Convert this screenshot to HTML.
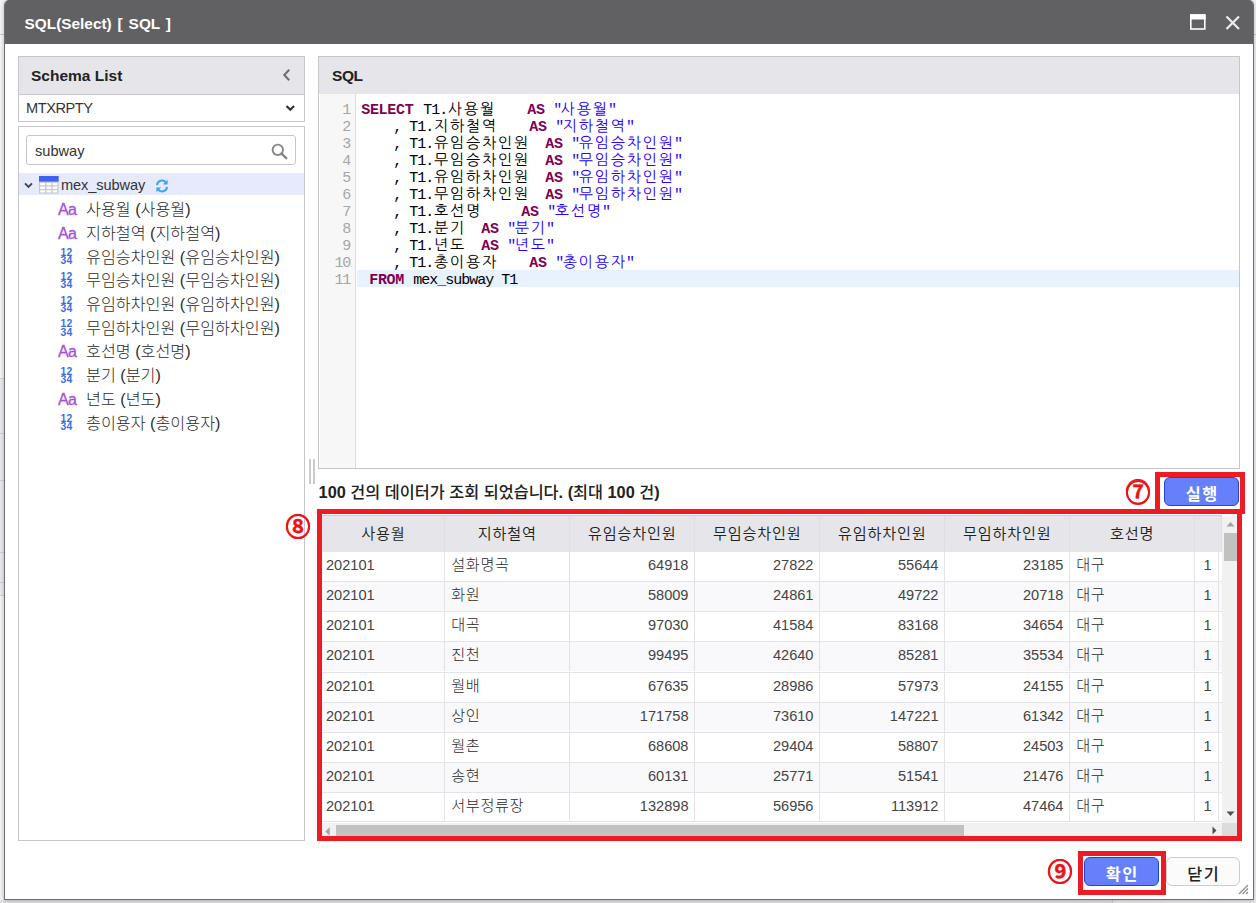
<!DOCTYPE html>
<html lang="ko"><head><meta charset="utf-8"><title>SQL(Select)</title>
<style>
*{box-sizing:border-box;margin:0;padding:0}
html,body{width:1256px;height:903px;overflow:hidden;background:#f1f1f4;font-family:"Liberation Sans","Noto Sans CJK KR",sans-serif;color:#333}
.abs{position:absolute}
#bg{left:0;top:0;width:1256px;height:903px;background:#f3f3f6}
#dlg{left:4px;top:0;width:1250px;height:900px;background:#fff;border:1px solid #6d6d70;border-top:none;border-radius:5px 5px 0 0;overflow:hidden;box-shadow:0 1px 4px rgba(0,0,0,.25)}
#title{left:0;top:0;width:100%;height:44px;background:#616163;color:#fff;font-weight:bold;font-size:15.4px;line-height:47px;padding-left:19.5px;word-spacing:1.6px}
.panel{border:1px solid #c6c6ca;background:#fff}
.phead{left:0;top:0;right:0;height:37px;background:#e6e6ea;font-weight:bold;font-size:15.5px;line-height:37px;color:#222;padding-left:12px}
.red{border:5px solid #ed1c24}
.btn{height:29px;width:75px;border-radius:6px;font-size:16.3px;font-weight:bold;text-align:center;line-height:32px;letter-spacing:1.4px;padding-left:1.4px}
.btn.blue{background:#6680fb;border:1px solid #2443d2;color:#fff}
.btn.white{background:#fbfbfc;border:1px solid #cdcdd0;color:#222}
.ring{width:24.6px;height:25px;border:2px solid #ee1118;border-radius:50%}
.circ{color:#ee1118;-webkit-text-stroke:.3px #ee1118;font-weight:bold;font-size:25px;line-height:30px;width:30px;text-align:center;font-family:"Liberation Sans","Noto Sans CJK KR",sans-serif}
/* tree */
.ti{left:0;width:285px;height:23.7px;font-size:16.2px;line-height:23.7px;color:#333;white-space:nowrap}
.ti .ic{position:absolute;left:38px;top:0;width:22px;text-align:center}
.ti .aa{color:#a550d6;font-size:16px;font-weight:normal;letter-spacing:-.9px;-webkit-text-stroke:.3px #a550d6;left:37px}
.ti .nn{color:#3b6fe0;font-size:10.4px;line-height:8.2px;font-weight:bold;top:3.5px;letter-spacing:.3px;left:35.5px;width:24px}
.ti .tx{position:absolute;left:67px;top:0;font-weight:300;color:#2b2b2b}
/* editor */
#ed{left:1px;top:37px;width:919px;height:374px;font-family:"Liberation Mono","NanumGothic",monospace;font-size:15px}
#gut{left:0;top:0;width:36px;height:374px;background:#f7f7f7;border-right:1px solid #ddd}
.ln{position:absolute;left:0;width:31.2px;text-align:right;color:#a6a6a6;height:17px;line-height:17px;font-size:15px;letter-spacing:-1.2px;padding-right:1.2px}
.cl{position:absolute;left:41.2px;height:17px;line-height:17px;white-space:pre;color:#000;letter-spacing:-1px}
.cl b{color:#7f0055;font-weight:bold;letter-spacing:-.3px}
.cl i{font-style:normal;color:#2a00ff}
.cl u{text-decoration:none;font-size:15px;letter-spacing:1.9px;margin-left:.7px;margin-right:-.7px}
.cl i u{margin-left:-.5px;margin-right:-.7px}
/* grid */
#grid{left:322px;top:515px;width:900px;height:307px;overflow:hidden;font-size:14.6px;border-top:1px solid #cfcfd4;background:#fff}
.gh{position:absolute;top:0;height:36.2px;background:#e6e6ea;border-right:1px solid #dedee3;text-align:center;line-height:35.5px;color:#222;font-weight:350;font-size:15.2px;letter-spacing:.8px;padding-left:1.5px}
.gr{position:absolute;left:0;width:900px;height:30px;border-top:1px solid #e4e4e8}
.gr.alt{background:#f9f9fb}
.gc{position:absolute;top:0;height:29px;line-height:26.8px;border-right:1px solid #e2e2e7;padding:0 5px 0 4px;white-space:nowrap;overflow:hidden;color:#444}
.gc.r{text-align:right}
.gc.l{padding-right:6.3px}
.gc.k{font-size:15.2px;letter-spacing:.6px;padding-left:6.8px;line-height:26.2px;font-weight:300;color:#2b2b2b}
</style></head><body>
<div id="bg" class="abs"></div>
<div class="abs" style="left:0;top:34px;width:4px;height:1px;background:#c9c9cc"></div>
<div class="abs" style="left:0;top:378px;width:4px;height:218px;background:#e9e9ed;border-top:1px solid #d2d2d6;border-bottom:1px solid #d2d2d6"></div>
<div class="abs" style="left:0;top:433px;width:4px;height:1px;background:#d2d2d6"></div>
<div class="abs" style="left:0;top:480px;width:4px;height:1px;background:#d2d2d6"></div>
<div class="abs" style="left:0;top:552px;width:4px;height:1px;background:#d2d2d6"></div>
<div class="abs" style="left:0;top:582px;width:4px;height:1px;background:#d2d2d6"></div>
<div class="abs" style="left:1254px;top:34px;width:2px;height:1px;background:#c9c9cc"></div>
<div class="abs" style="left:0;top:900px;width:1113px;height:3px;background:#e4e4e7;border-right:1px solid #cfcfd2"></div>
<div class="abs" style="left:1113px;top:900px;width:143px;height:3px;background:#ececef"></div>
<div id="dlg" class="abs">
  <div id="title" class="abs">SQL(Select) [ SQL ]</div>
  <svg class="abs" style="left:1184px;top:14px" width="18" height="17" viewBox="0 0 18 17"><rect x="1.8" y="1" width="14" height="14" fill="none" stroke="#fff" stroke-width="1.6"/><rect x="1" y="0.5" width="15.6" height="5" fill="#fff"/></svg>
  <svg class="abs" style="left:1220.3px;top:14.6px" width="16" height="16" viewBox="0 0 16 16"><path d="M1.5 1.5 L14 14 M14 1.5 L1.5 14" stroke="#ececee" stroke-width="2.2" fill="none"/></svg>
</div>

<!-- left: schema list -->
<div class="abs panel" style="left:18px;top:56px;width:287px;height:66px">
  <div class="abs phead">Schema List</div>
  <svg class="abs" style="left:262.5px;top:10.5px" width="10" height="14" viewBox="0 0 10 14"><path d="M7.2 1.8 L2.3 7 L7.2 12.2" stroke="#6f6f73" stroke-width="2.1" fill="none"/></svg>
  <div class="abs" style="left:0;top:37px;width:285px;height:1px;background:#c6c6ca"></div>
  <div class="abs" style="left:7px;top:38px;height:26px;line-height:27px;font-size:14.6px;color:#333;letter-spacing:-.45px">MTXRPTY</div>
  <svg class="abs" style="left:266px;top:46.5px" width="11" height="9" viewBox="0 0 11 9"><path d="M1.5 2 L5.3 5.8 L9.1 2" stroke="#333" stroke-width="2.2" fill="none"/></svg>
</div>
<div class="abs panel" style="left:18px;top:126px;width:287px;height:715px">
  <div class="abs" style="left:7px;top:8px;width:270px;height:30px;border:1px solid #c6c6ca;border-radius:3px"></div>
  <div class="abs" style="left:16px;top:9px;height:29px;line-height:30.5px;font-size:14.6px;color:#333">subway</div>
  <svg class="abs" style="left:251.5px;top:16px" width="17" height="17" viewBox="0 0 17 17"><circle cx="6.8" cy="6.8" r="5.2" stroke="#858588" stroke-width="1.9" fill="none"/><path d="M10.6 10.6 L15.2 15.2" stroke="#858588" stroke-width="2.4" stroke-linecap="round"/></svg>
  <!-- tree -->
  <div class="abs" style="left:0;top:46px;width:285px;height:21.5px;background:#e5ebfd"></div>
  <svg class="abs" style="left:4.8px;top:54.5px" width="9" height="7" viewBox="0 0 9 7"><path d="M1 1.3 L4.5 4.8 L8 1.3" stroke="#444" stroke-width="1.9" fill="none"/></svg>
  <svg class="abs" style="left:20px;top:49px" width="20" height="18" viewBox="0 0 20 18"><rect x="0" y="0" width="19.6" height="17.6" fill="#c6c6ca"/><rect x="0" y="0" width="19.6" height="5.6" fill="#3f63ee"/><g fill="#fff"><rect x="1.2" y="6.8" width="4.9" height="2.5"/><rect x="7.4" y="6.8" width="4.9" height="2.5"/><rect x="13.6" y="6.8" width="4.8" height="2.5"/><rect x="1.2" y="10.5" width="4.9" height="2.5"/><rect x="7.4" y="10.5" width="4.9" height="2.5"/><rect x="13.6" y="10.5" width="4.8" height="2.5"/><rect x="1.2" y="14.2" width="4.9" height="2.3"/><rect x="7.4" y="14.2" width="4.9" height="2.3"/><rect x="13.6" y="14.2" width="4.8" height="2.3"/></g></svg>
  <div class="abs" style="left:42px;top:47px;height:21.5px;line-height:22px;font-size:14.6px;color:#333;letter-spacing:-.1px">mex_subway</div>
  <svg class="abs" style="left:136px;top:52px" width="14" height="14" viewBox="0 0 14 14"><path d="M2 6.2 A5 5 0 0 1 11 3.6" stroke="#3fa4f4" stroke-width="2" fill="none"/><path d="M12.6 0.8 V5.6 H7.8 Z" fill="#3fa4f4"/><path d="M12 7.8 A5 5 0 0 1 3 10.4" stroke="#3fa4f4" stroke-width="2" fill="none"/><path d="M1.4 13.2 V8.4 H6.2 Z" fill="#3fa4f4"/></svg>
  <div id="tree" class="abs" style="left:0;top:71.3px;width:285px">
    <div class="abs ti" style="top:0"><span class="ic aa">Aa</span><span class="tx">사용월 (사용월)</span></div>
    <div class="abs ti" style="top:23.7px"><span class="ic aa">Aa</span><span class="tx">지하철역 (지하철역)</span></div>
    <div class="abs ti" style="top:47.4px"><span class="ic nn">12<br>34</span><span class="tx">유임승차인원 (유임승차인원)</span></div>
    <div class="abs ti" style="top:71.1px"><span class="ic nn">12<br>34</span><span class="tx">무임승차인원 (무임승차인원)</span></div>
    <div class="abs ti" style="top:94.8px"><span class="ic nn">12<br>34</span><span class="tx">유임하차인원 (유임하차인원)</span></div>
    <div class="abs ti" style="top:118.5px"><span class="ic nn">12<br>34</span><span class="tx">무임하차인원 (무임하차인원)</span></div>
    <div class="abs ti" style="top:142.2px"><span class="ic aa">Aa</span><span class="tx">호선명 (호선명)</span></div>
    <div class="abs ti" style="top:165.9px"><span class="ic nn">12<br>34</span><span class="tx">분기 (분기)</span></div>
    <div class="abs ti" style="top:189.6px"><span class="ic aa">Aa</span><span class="tx">년도 (년도)</span></div>
    <div class="abs ti" style="top:213.3px"><span class="ic nn">12<br>34</span><span class="tx">총이용자 (총이용자)</span></div>
  </div>
</div>

<!-- sql panel -->
<div class="abs panel" style="left:318px;top:56px;width:922px;height:413px">
  <div class="abs phead" style="padding-left:13px;letter-spacing:-.4px">SQL</div>
  <div id="ed" class="abs">
    <div id="gut" class="abs"></div>
    <div class="abs" style="left:37px;top:176.3px;width:882px;height:16.4px;background:#e8f2ff"></div>
    <div id="lines">
    <div class="ln" style="top:8.3px">1</div><div class="cl" style="top:8.3px"><b style="margin-right:1.8px">SELECT</b> T1.<u>사용월</u>    <b style="margin-right:0.6px">AS</b> <i>"<u>사용월</u>"</i></div>
    <div class="ln" style="top:25.2px">2</div><div class="cl" style="top:25.2px">    , T1.<u>지하철역</u>    <b style="margin-right:0.6px">AS</b> <i>"<u>지하철역</u>"</i></div>
    <div class="ln" style="top:42.1px">3</div><div class="cl" style="top:42.1px">    , T1.<u>유임승차인원</u>  <b style="margin-right:0.6px">AS</b> <i>"<u>유임승차인원</u>"</i></div>
    <div class="ln" style="top:59.1px">4</div><div class="cl" style="top:59.1px">    , T1.<u>무임승차인원</u>  <b style="margin-right:0.6px">AS</b> <i>"<u>무임승차인원</u>"</i></div>
    <div class="ln" style="top:76.0px">5</div><div class="cl" style="top:76.0px">    , T1.<u>유임하차인원</u>  <b style="margin-right:0.6px">AS</b> <i>"<u>유임하차인원</u>"</i></div>
    <div class="ln" style="top:92.9px">6</div><div class="cl" style="top:92.9px">    , T1.<u>무임하차인원</u>  <b style="margin-right:0.6px">AS</b> <i>"<u>무임하차인원</u>"</i></div>
    <div class="ln" style="top:109.8px">7</div><div class="cl" style="top:109.8px">    , T1.<u>호선명</u>     <b style="margin-right:0.6px">AS</b> <i>"<u>호선명</u>"</i></div>
    <div class="ln" style="top:126.7px">8</div><div class="cl" style="top:126.7px">    , T1.<u>분기</u>  <b style="margin-right:0.6px">AS</b> <i>"<u>분기</u>"</i></div>
    <div class="ln" style="top:143.7px">9</div><div class="cl" style="top:143.7px">    , T1.<u>년도</u>  <b style="margin-right:0.6px">AS</b> <i>"<u>년도</u>"</i></div>
    <div class="ln" style="top:160.6px">10</div><div class="cl" style="top:160.6px">    , T1.<u>총이용자</u>    <b style="margin-right:0.6px">AS</b> <i>"<u>총이용자</u>"</i></div>
    <div class="ln" style="top:177.5px">11</div><div class="cl" style="top:177.5px"> <b style="margin-right:1.2px">FROM</b> mex_subway T1</div>
    </div><!--/lines-->
  </div>
</div>
<!-- splitter grip -->
<div class="abs" style="left:309px;top:459px;width:2px;height:24.5px;background:#cbcbcd"></div>
<div class="abs" style="left:312.5px;top:459px;width:2px;height:24.5px;background:#cbcbcd"></div>

<div class="abs" style="left:318.6px;top:479px;height:26px;line-height:26px;font-size:16.3px;font-weight:500;color:#222;white-space:nowrap" id="status"><b>100</b> 건의 데이터가 조회 되었습니다<b>. (</b>최대 <b>100</b> 건<b>)</b></div>

<!-- run -->
<div class="abs circ" style="left:1123.1px;top:477.4px">⑦</div><div class="abs ring" style="left:1125.5px;top:480.1px"></div>
<div class="abs btn blue" style="left:1164px;top:477px">실행</div>

<!-- grid -->
<div id="grid" class="abs">
  <div class="gh" style="left:0px;width:122.5px">사용월</div>
  <div class="gh" style="left:122.5px;width:125.0px">지하철역</div>
  <div class="gh" style="left:247.5px;width:125.0px">유임승차인원</div>
  <div class="gh" style="left:372.5px;width:125.0px">무임승차인원</div>
  <div class="gh" style="left:497.5px;width:125.0px">유임하차인원</div>
  <div class="gh" style="left:622.5px;width:125.0px">무임하차인원</div>
  <div class="gh" style="left:747.5px;width:125.0px">호선명</div>
  <div class="gh" style="left:872.5px;width:27.5px"></div>
  <div class="gr" style="top:35.4px"><div class="gc" style="left:0px;width:122.5px">202101</div><div class="gc k" style="left:122.5px;width:125.0px">설화명곡</div><div class="gc r" style="left:247.5px;width:125.0px">64918</div><div class="gc r" style="left:372.5px;width:125.0px">27822</div><div class="gc r" style="left:497.5px;width:125.0px">55644</div><div class="gc r" style="left:622.5px;width:125.0px">23185</div><div class="gc k" style="left:747.5px;width:125.0px">대구</div><div class="gc r l" style="left:872.5px;width:24.5px">1</div></div>
  <div class="gr alt" style="top:65.43px"><div class="gc" style="left:0px;width:122.5px">202101</div><div class="gc k" style="left:122.5px;width:125.0px">화원</div><div class="gc r" style="left:247.5px;width:125.0px">58009</div><div class="gc r" style="left:372.5px;width:125.0px">24861</div><div class="gc r" style="left:497.5px;width:125.0px">49722</div><div class="gc r" style="left:622.5px;width:125.0px">20718</div><div class="gc k" style="left:747.5px;width:125.0px">대구</div><div class="gc r l" style="left:872.5px;width:24.5px">1</div></div>
  <div class="gr" style="top:95.46px"><div class="gc" style="left:0px;width:122.5px">202101</div><div class="gc k" style="left:122.5px;width:125.0px">대곡</div><div class="gc r" style="left:247.5px;width:125.0px">97030</div><div class="gc r" style="left:372.5px;width:125.0px">41584</div><div class="gc r" style="left:497.5px;width:125.0px">83168</div><div class="gc r" style="left:622.5px;width:125.0px">34654</div><div class="gc k" style="left:747.5px;width:125.0px">대구</div><div class="gc r l" style="left:872.5px;width:24.5px">1</div></div>
  <div class="gr alt" style="top:125.49px"><div class="gc" style="left:0px;width:122.5px">202101</div><div class="gc k" style="left:122.5px;width:125.0px">진천</div><div class="gc r" style="left:247.5px;width:125.0px">99495</div><div class="gc r" style="left:372.5px;width:125.0px">42640</div><div class="gc r" style="left:497.5px;width:125.0px">85281</div><div class="gc r" style="left:622.5px;width:125.0px">35534</div><div class="gc k" style="left:747.5px;width:125.0px">대구</div><div class="gc r l" style="left:872.5px;width:24.5px">1</div></div>
  <div class="gr" style="top:155.52px"><div class="gc" style="left:0px;width:122.5px">202101</div><div class="gc k" style="left:122.5px;width:125.0px">월배</div><div class="gc r" style="left:247.5px;width:125.0px">67635</div><div class="gc r" style="left:372.5px;width:125.0px">28986</div><div class="gc r" style="left:497.5px;width:125.0px">57973</div><div class="gc r" style="left:622.5px;width:125.0px">24155</div><div class="gc k" style="left:747.5px;width:125.0px">대구</div><div class="gc r l" style="left:872.5px;width:24.5px">1</div></div>
  <div class="gr alt" style="top:185.55px"><div class="gc" style="left:0px;width:122.5px">202101</div><div class="gc k" style="left:122.5px;width:125.0px">상인</div><div class="gc r" style="left:247.5px;width:125.0px">171758</div><div class="gc r" style="left:372.5px;width:125.0px">73610</div><div class="gc r" style="left:497.5px;width:125.0px">147221</div><div class="gc r" style="left:622.5px;width:125.0px">61342</div><div class="gc k" style="left:747.5px;width:125.0px">대구</div><div class="gc r l" style="left:872.5px;width:24.5px">1</div></div>
  <div class="gr" style="top:215.58px"><div class="gc" style="left:0px;width:122.5px">202101</div><div class="gc k" style="left:122.5px;width:125.0px">월촌</div><div class="gc r" style="left:247.5px;width:125.0px">68608</div><div class="gc r" style="left:372.5px;width:125.0px">29404</div><div class="gc r" style="left:497.5px;width:125.0px">58807</div><div class="gc r" style="left:622.5px;width:125.0px">24503</div><div class="gc k" style="left:747.5px;width:125.0px">대구</div><div class="gc r l" style="left:872.5px;width:24.5px">1</div></div>
  <div class="gr alt" style="top:245.61px"><div class="gc" style="left:0px;width:122.5px">202101</div><div class="gc k" style="left:122.5px;width:125.0px">송현</div><div class="gc r" style="left:247.5px;width:125.0px">60131</div><div class="gc r" style="left:372.5px;width:125.0px">25771</div><div class="gc r" style="left:497.5px;width:125.0px">51541</div><div class="gc r" style="left:622.5px;width:125.0px">21476</div><div class="gc k" style="left:747.5px;width:125.0px">대구</div><div class="gc r l" style="left:872.5px;width:24.5px">1</div></div>
  <div class="gr" style="top:275.64px"><div class="gc" style="left:0px;width:122.5px">202101</div><div class="gc k" style="left:122.5px;width:125.0px">서부정류장</div><div class="gc r" style="left:247.5px;width:125.0px">132898</div><div class="gc r" style="left:372.5px;width:125.0px">56956</div><div class="gc r" style="left:497.5px;width:125.0px">113912</div><div class="gc r" style="left:622.5px;width:125.0px">47464</div><div class="gc k" style="left:747.5px;width:125.0px">대구</div><div class="gc r l" style="left:872.5px;width:24.5px">1</div></div>
</div><!--/grid-->
<!-- scrollbars -->
<div class="abs" style="left:1222px;top:516px;width:15.5px;height:307px;background:#f1f1f1"></div>
<div class="abs" style="left:1224px;top:533px;width:13.5px;height:28px;background:#c1c1c1"></div>
<svg class="abs" style="left:1226px;top:521px" width="9" height="6" viewBox="0 0 9 6"><path d="M0.5 5.5 L4.5 1 L8.5 5.5 Z" fill="#a3a3a3"/></svg>
<svg class="abs" style="left:1226px;top:811px" width="9" height="6" viewBox="0 0 9 6"><path d="M0.5 0.5 L4.5 5 L8.5 0.5 Z" fill="#505050"/></svg>
<div class="abs" style="left:322px;top:823px;width:900px;height:13px;background:#f1f1f1"></div>
<div class="abs" style="left:1222px;top:823px;width:15.5px;height:13px;background:#dcdcdc"></div>
<div class="abs" style="left:336px;top:825px;width:628px;height:11px;background:#c1c1c1"></div>
<svg class="abs" style="left:324.5px;top:826.5px" width="5" height="9" viewBox="0 0 5 9"><path d="M4.7 0.3 L0.3 4.5 L4.7 8.7 Z" fill="#a3a3a3"/></svg>
<div class="abs" style="left:322px;top:820.6px;width:900px;height:1px;background:#e2e2e7"></div>
<div class="abs" style="left:322px;top:821.6px;width:900px;height:1.6px;background:#fff"></div>
<svg class="abs" style="left:1212px;top:826px" width="5" height="9" viewBox="0 0 5 9"><path d="M0.5 0.5 L4.5 4.5 L0.5 8.5 Z" fill="#505050"/></svg>

<!-- red annotation boxes -->
<div class="abs red" style="left:317px;top:509.3px;width:925px;height:331.4px"></div>
<div class="abs red" style="left:1155px;top:472px;width:90px;height:41.7px"></div>
<div class="abs circ" style="left:283.1px;top:511.9px">⑧</div><div class="abs ring" style="left:285.5px;top:514.1px"></div>

<!-- bottom buttons -->
<div class="abs circ" style="left:1045.1px;top:856.9px">⑨</div><div class="abs ring" style="left:1047.5px;top:859.1px"></div>
<div class="abs red" style="left:1078px;top:851.3px;width:88px;height:43.3px"></div>
<div class="abs btn blue" style="left:1084px;top:857px">확인</div>
<div class="abs btn white" style="left:1166px;top:857px;width:74px;font-weight:500">닫기</div>
<svg class="abs" style="left:1237px;top:883px" width="12" height="12" viewBox="0 0 12 12"><path d="M11 2 L2 11 M11 5.5 L5.5 11 M11 9 L9 11" stroke="#8a8a8d" stroke-width="1.2" fill="none"/></svg>
</body></html>
